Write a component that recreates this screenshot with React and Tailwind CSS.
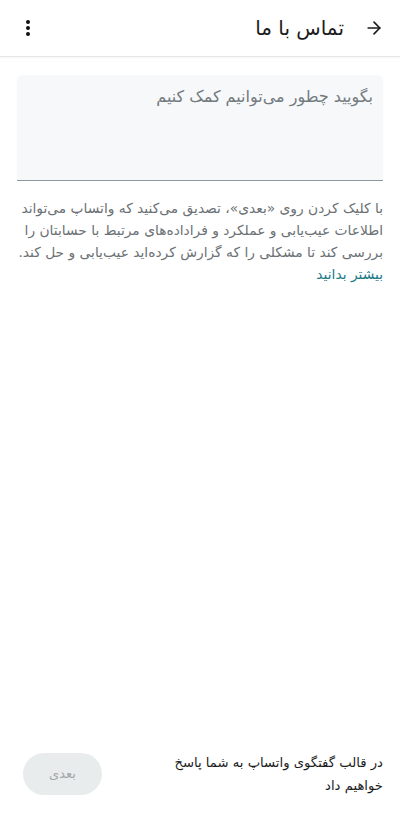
import { ArrowRight } from "lucide-react";

const font = { fontFamily: '"DejaVu Sans", sans-serif' };

export default function App() {
  return (
    <div dir="rtl" style={font} className="w-[400px] h-[816px] bg-white flex flex-col overflow-hidden">
      <header className="h-[57px] shrink-0 flex items-center justify-between px-4 border-b border-[#e4e6e7] shadow-[0_1px_2px_rgba(0,0,0,0.04)]">
        <div className="flex items-center gap-5">
          <ArrowRight size={20} strokeWidth={2} className="text-[#1c1c1c]" />
          <h1 className="text-[20px] text-[#1c1c1c] leading-none">تماس با ما</h1>
        </div>
        <button className="w-6 h-6 flex items-center justify-center">
          <svg width="6" height="18" viewBox="0 0 6 18">
            <circle cx="3" cy="3" r="2" fill="#111" />
            <circle cx="3" cy="9" r="2" fill="#111" />
            <circle cx="3" cy="15" r="2" fill="#111" />
          </svg>
        </button>
      </header>

      <main className="flex-1 px-[17px] pt-[18px]">
        <div className="h-[106px] bg-[#f6f8f9] rounded-t-md border-b border-[#8a9a9e] px-[10px] pt-[10px]">
          <p className="text-[16px] text-[#737a7e] leading-6">بگویید چطور می‌توانیم کمک کنیم</p>
        </div>
        <p className="mt-[16px] text-[13.8px] leading-[22px] text-[#6b7175] whitespace-nowrap">
          با کلیک کردن روی «بعدی»، تصدیق می‌کنید که واتساپ می‌تواند
          <br />
          اطلاعات عیب‌یابی و عملکرد و فراداده‌های مرتبط با حسابتان را
          <br />
          بررسی کند تا مشکلی را که گزارش کرده‌اید عیب‌یابی و حل کند.
          <br />
          <a className="text-[#1a7a86]">بیشتر بدانید</a>
        </p>
      </main>

      <footer className="h-[80px] shrink-0 flex items-center justify-between pr-[17px] pl-[23px] pb-[4px]">
        <p className="text-[13.2px] leading-[23px] text-[#1c1c1c] w-[220px]">در قالب گفتگوی واتساپ به شما پاسخ خواهیم داد</p>
        <button className="w-[79px] h-[42px] rounded-full bg-[#e9eced] text-[13px] text-[#a3a8ab]">بعدی</button>
      </footer>
    </div>
  );
}
